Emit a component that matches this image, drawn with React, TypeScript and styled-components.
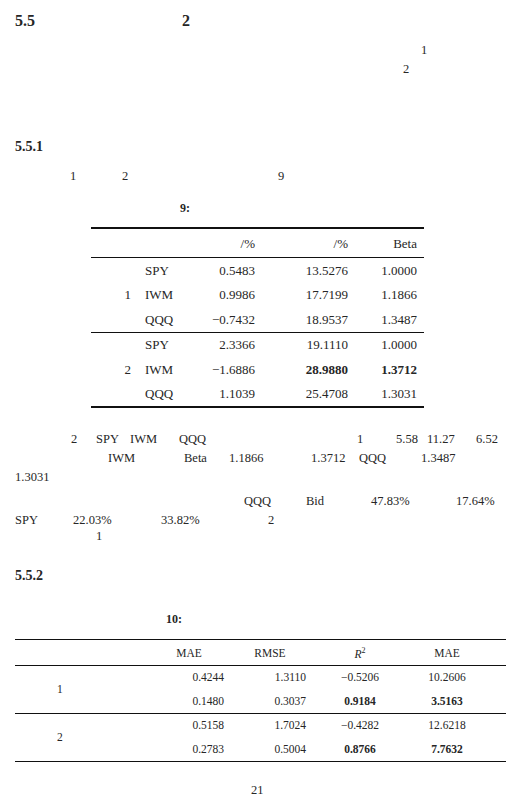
import React from "react";
import styled, { createGlobalStyle } from "styled-components";

type W = [number, string, boolean?];

const GlobalStyle = createGlobalStyle`
  html, body { margin: 0; padding: 0; background: #fff; }
  body {
    font-family: "Liberation Serif", "Times New Roman", serif;
    color: #262626;
  }
`;

const Page = styled.div`
  width: 518px;
  height: 809px;
  padding-top: 10px;
  box-sizing: border-box;
  overflow: hidden;
`;

// one printed line; words share the single grid cell and are pushed by margin
const Line = styled.div<{ $h?: number; $gap?: number; $size?: number }>`
  display: grid;
  align-items: center;
  height: ${p => p.$h ?? 19}px;
  margin-top: ${p => p.$gap ?? 0}px;
  font-size: ${p => p.$size ?? 12.5}px;
  line-height: 1;
`;

const Word = styled.span<{ $x: number; $bold?: boolean }>`
  grid-area: 1 / 1;
  justify-self: start;
  margin-left: ${p => p.$x}px;
  font-weight: ${p => (p.$bold ? 700 : 400)};
  white-space: nowrap;
`;

function TextLine({ words, h, gap, size, bold }: { words: W[]; h?: number; gap?: number; size?: number; bold?: boolean }) {
  return (
    <Line $h={h} $gap={gap} $size={size}>
      {words.map(([x, t, b], i) => (
        <Word key={i} $x={x} $bold={bold || b}>{t}</Word>
      ))}
    </Line>
  );
}

const Cell = styled.div<{ $align?: string; $bold?: boolean; $span?: number; $pl?: number; $pr?: number; $pt?: number }>`
  text-align: ${p => p.$align ?? "right"};
  font-weight: ${p => (p.$bold ? 700 : 400)};
  padding-left: ${p => p.$pl ?? 0}px;
  padding-right: ${p => p.$pr ?? 0}px;
  padding-top: ${p => p.$pt ?? 0}px;
  white-space: nowrap;
  ${p => (p.$span ? `grid-row: span ${p.$span};` : "")}
`;

/* ---------- table 9 ---------- */

const StockTable = styled.div`
  margin: 10px 0 0 91px;
  width: 333px;
  border-top: 2px solid #111;
  border-bottom: 2px solid #111;
  font-size: 13px;
  line-height: 1;
`;

const StockGrid = styled.div<{ $head?: boolean }>`
  display: grid;
  grid-template-columns: 46px 63px 55px 93px 76px;
  grid-auto-rows: ${p => (p.$head ? "28px" : "24.5px")};
  align-items: center;
  border-top: ${p => (p.$head ? "none" : "1px solid #111")};
`;

const stockGroups: { label: string; rows: [string, string, string, string, boolean?][] }[] = [
  {
    label: "1",
    rows: [
      ["SPY", "0.5483", "13.5276", "1.0000"],
      ["IWM", "0.9986", "17.7199", "1.1866"],
      ["QQQ", "\u22120.7432", "18.9537", "1.3487"],
    ],
  },
  {
    label: "2",
    rows: [
      ["SPY", "2.3366", "19.1110", "1.0000"],
      ["IWM", "\u22121.6886", "28.9880", "1.3712", true],
      ["QQQ", "1.1039", "25.4708", "1.3031"],
    ],
  },
];

/* ---------- table 10 ---------- */

const ErrorTable = styled.div`
  margin: 10.5px 0 0 15px;
  width: 491px;
  border-top: 1px solid #111;
  border-bottom: 1px solid #111;
  font-size: 11.5px;
  line-height: 1;
`;

const ErrorGrid = styled.div<{ $head?: boolean }>`
  display: grid;
  grid-template-columns: 135px 78px 78px 108px 92px;
  grid-auto-rows: ${p => (p.$head ? "25px" : "23.5px")};
  align-items: center;
  border-top: ${p => (p.$head ? "none" : "1px solid #111")};
`;

const Italic = styled.span`
  font-style: italic;
`;

const Sup = styled.sup`
  font-size: 8px;
`;

const errorGroups: { label: string; rows: [string, string, string, string, boolean?][] }[] = [
  {
    label: "1",
    rows: [
      ["0.4244", "1.3110", "\u22120.5206", "10.2606"],
      ["0.1480", "0.3037", "0.9184", "3.5163", true],
    ],
  },
  {
    label: "2",
    rows: [
      ["0.5158", "1.7024", "\u22120.4282", "12.6218"],
      ["0.2783", "0.5004", "0.8766", "7.7632", true],
    ],
  },
];

export default function App() {
  return (
    <Page>
      <GlobalStyle />
      <TextLine h={21} size={16} bold words={[[15, "5.5"], [182, "2"]]} />
      <TextLine gap={10} words={[[421, "1"]]} />
      <TextLine words={[[403, "2"]]} />

      <TextLine gap={58} size={14} bold words={[[15, "5.5.1"]]} />
      <TextLine gap={10.5} words={[[70, "1"], [122, "2"], [278, "9"]]} />
      <TextLine gap={12.5} size={12} bold words={[[180, "9:"]]} />

      <StockTable>
        <StockGrid $head>
          <Cell />
          <Cell />
          <Cell>/%</Cell>
          <Cell>/%</Cell>
          <Cell $pr={7}>Beta</Cell>
        </StockGrid>
        {stockGroups.map(g => (
          <StockGrid key={g.label}>
            <Cell $span={3} $pr={6}>{g.label}</Cell>
            {g.rows.map(([tick, a, b, c, bold]) => (
              <React.Fragment key={tick}>
                <Cell $align="left" $pl={8}>{tick}</Cell>
                <Cell>{a}</Cell>
                <Cell $bold={bold}>{b}</Cell>
                <Cell $bold={bold} $pr={7}>{c}</Cell>
              </React.Fragment>
            ))}
          </StockGrid>
        ))}
      </StockTable>

      <TextLine
        gap={21.5}
        words={[[71, "2"], [96, "SPY"], [130, "IWM"], [179, "QQQ"], [357, "1"], [396, "5.58"], [427, "11.27"], [476, "6.52"]]}
      />
      <TextLine words={[[108, "IWM"], [184, "Beta"], [229, "1.1866"], [311, "1.3712"], [359, "QQQ"], [421, "1.3487"]]} />
      <TextLine words={[[15, "1.3031"]]} />
      <TextLine gap={5} words={[[244, "QQQ"], [306, "Bid"], [371, "47.83%"], [456, "17.64%"]]} />
      <TextLine words={[[15, "SPY"], [73, "22.03%"], [161, "33.82%"], [268, "2"]]} />
      <TextLine gap={-2.5} words={[[96, "1"]]} />

      <TextLine gap={20} size={14} bold words={[[15, "5.5.2"]]} />
      <TextLine gap={24.5} size={12} bold words={[[166, "10:"]]} />

      <ErrorTable>
        <ErrorGrid $head>
          <Cell />
          <Cell $align="center" $pt={3}>MAE</Cell>
          <Cell $align="center" $pl={6} $pt={3}>RMSE</Cell>
          <Cell $align="center" $pt={3}>
            <Italic>R</Italic>
            <Sup>2</Sup>
          </Cell>
          <Cell $align="center" $pr={26} $pt={3}>MAE</Cell>
        </ErrorGrid>
        {errorGroups.map(g => (
          <ErrorGrid key={g.label}>
            <Cell $span={2} $align="left" $pl={42}>{g.label}</Cell>
            {g.rows.map(([a, b, c, d, bold], ri) => (
              <React.Fragment key={ri}>
                <Cell $pr={4}>{a}</Cell>
                <Cell>{b}</Cell>
                <Cell $align="center" $bold={bold}>{c}</Cell>
                <Cell $align="center" $bold={bold} $pr={26}>{d}</Cell>
              </React.Fragment>
            ))}
          </ErrorGrid>
        ))}
      </ErrorTable>

      <TextLine gap={18.5} words={[[251, "21"]]} />
    </Page>
  );
}
